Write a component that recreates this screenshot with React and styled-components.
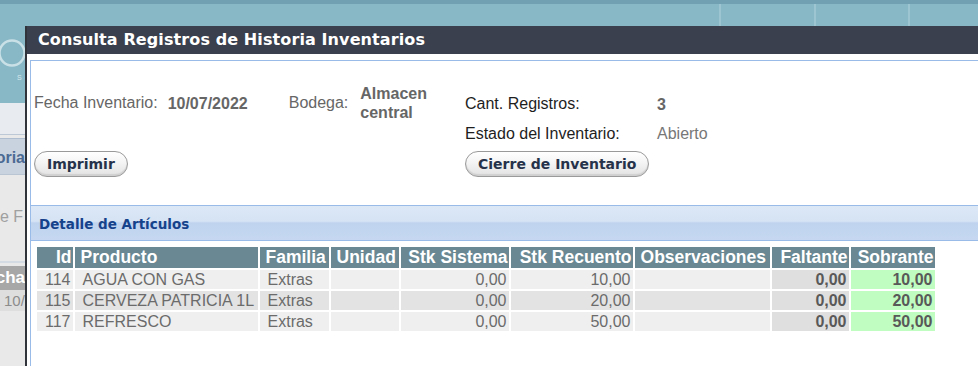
import React from "react";
import styled, { createGlobalStyle } from "styled-components";

const GlobalStyle = createGlobalStyle`
  * {
    box-sizing: border-box;
  }
  html,
  body {
    margin: 0;
    padding: 0;
    background: #e9e9e9;
    overflow: hidden;
  }
`;

const columns = [
  { key: "id", label: "Id", width: 35, align: "right" },
  { key: "producto", label: "Producto", width: 183 },
  { key: "familia", label: "Familia", width: 69 },
  { key: "unidad", label: "Unidad", width: 68 },
  { key: "sistema", label: "Stk Sistema", width: 108, align: "right" },
  { key: "recuento", label: "Stk Recuento", width: 122, align: "right" },
  { key: "obs", label: "Observaciones", width: 135 },
  { key: "faltante", label: "Faltante", width: 77, align: "right", tone: "short" },
  { key: "sobrante", label: "Sobrante", width: 84, align: "right", tone: "extra" },
];

const rows = [
  { id: 114, producto: "AGUA CON GAS", familia: "Extras", unidad: "", sistema: "0,00", recuento: "10,00", obs: "", faltante: "0,00", sobrante: "10,00" },
  { id: 115, producto: "CERVEZA PATRICIA 1L", familia: "Extras", unidad: "", sistema: "0,00", recuento: "20,00", obs: "", faltante: "0,00", sobrante: "20,00" },
  { id: 117, producto: "REFRESCO", familia: "Extras", unidad: "", sistema: "0,00", recuento: "50,00", obs: "", faltante: "0,00", sobrante: "50,00" },
];

function App() {
  return (
    <Page>
      <GlobalStyle />
      <TopBar>
        <Logo>
          <svg width="25" height="30" viewBox="0 0 25 30">
            <circle cx="12" cy="15" r="12.5" fill="none" stroke="#d9eaef" strokeWidth="2.5" opacity="0.8" />
          </svg>
          <LogoText>SOFTWARE</LogoText>
        </Logo>
        <TopTab />
        <TopTab $w={94} />
        <TopTab $w={70} />
      </TopBar>
      <Back>
        <Sidebar>
          <SideBlank />
          <SideTab>Historia</SideTab>
          <SideText>e F</SideText>
          <SideHead>Fecha</SideHead>
          <SideCell>10/</SideCell>
        </Sidebar>
      </Back>

      <Modal>
        <TitleBar>Consulta Registros de Historia Inventarios</TitleBar>
        <ModalBody>
          <Frame>
            <InfoArea>
              <LeftCol>
                <FieldsRow>
                  <Label>Fecha Inventario:</Label>
                  <Value $gap={10}>10/07/2022</Value>
                  <Label $gap={41}>Bodega:</Label>
                  <Value $gap={12} $wrap>Almacen central</Value>
                </FieldsRow>
                <Button>Imprimir</Button>
              </LeftCol>
              <RightCol>
                <InfoLine>
                  <DarkLabel>Cant. Registros:</DarkLabel>
                  <Value>3</Value>
                </InfoLine>
                <InfoLine>
                  <DarkLabel>Estado del Inventario:</DarkLabel>
                  <PlainValue>Abierto</PlainValue>
                </InfoLine>
                <Button $top={2}>Cierre de Inventario</Button>
              </RightCol>
            </InfoArea>

            <SectionHeader>Detalle de Artículos</SectionHeader>

            <TableWrap>
              <Grid>
                <thead>
                  <tr>
                    {columns.map((c) => (
                      <Th key={c.key} $w={c.width} $align={c.align}>
                        {c.label}
                      </Th>
                    ))}
                  </tr>
                </thead>
                <tbody>
                  {rows.map((r, i) => (
                    <tr key={r.id}>
                      {columns.map((c) => (
                        <Td key={c.key} $align={c.align} $tone={c.tone} $even={i % 2 === 1}>
                          {r[c.key]}
                        </Td>
                      ))}
                    </tr>
                  ))}
                </tbody>
              </Grid>
            </TableWrap>
          </Frame>
        </ModalBody>
      </Modal>
    </Page>
  );
}

export default App;

const Page = styled.div`
  position: relative;
  width: 978px;
  height: 366px;
  overflow: hidden;
  background: #e9e9e9;
  font-family: "Liberation Sans", Arial, sans-serif;
`;

const TopBar = styled.div`
  display: flex;
  height: 103px;
  background: #88b8c6;
  border-top: 4px solid #70a0b1;
`;

const Logo = styled.div`
  width: 719px;
  padding-top: 34px;
  display: flex;
  flex-direction: column;
`;

const LogoText = styled.span`
  margin: 6px 0 0 17px;
  font-size: 7px;
  letter-spacing: 3px;
  color: #d6e7ec;
`;

const TopTab = styled.div`
  width: ${(p) => p.$w || 95}px;
  height: 22px;
  border-left: 2px solid #9cc5d1;
`;

const Back = styled.div`
  display: flex;
`;

const Sidebar = styled.div`
  width: 25px;
  display: flex;
  flex-direction: column;
  overflow: hidden;
  white-space: nowrap;
`;

const SideBlank = styled.div`
  height: 32px;
  background: #e8ecf1;
  border-bottom: 1px solid #bcc8d6;
`;

const SideTab = styled.div`
  display: flex;
  justify-content: flex-end;
  height: 37px;
  margin-top: 3px;
  padding-top: 2px;
  border-top: 1px solid #aebdcf;
  border-bottom: 1px solid #b9c5d3;
  background: #c9d3df;
  color: #4b6a93;
  font-weight: bold;
  font-size: 16px;
  line-height: 34px;
`;

const SideText = styled.div`
  height: 88px;
  padding-top: 33px;
  border-bottom: 2px solid #d4dbe2;
  color: #a0a0a0;
  font-size: 16px;
`;

const SideHead = styled.div`
  display: flex;
  justify-content: flex-end;
  height: 24px;
  margin-top: 3px;
  background: #a7a7a7;
  color: #fff;
  font-weight: bold;
  font-size: 17px;
  line-height: 24px;
`;

const SideCell = styled.div`
  height: 21px;
  padding-left: 4px;
  background: #dedede;
  color: #8c8c8c;
  font-size: 15px;
  line-height: 21px;
`;

const Modal = styled.div`
  position: absolute;
  left: 25px;
  top: 26px;
  right: 0;
  bottom: 0;
  display: flex;
  flex-direction: column;
  background: #fff;
  border-left: 2px solid #30343a;
`;

const TitleBar = styled.div`
  height: 28px;
  padding-left: 11px;
  background: #3a404d;
  color: #fff;
  font-family: "DejaVu Sans", Verdana, sans-serif;
  font-weight: bold;
  font-size: 16px;
  letter-spacing: 0.1px;
  line-height: 28px;
`;

const ModalBody = styled.div`
  flex: 1;
  display: flex;
  padding: 6px 0 0 3px;
`;

const Frame = styled.div`
  flex: 1;
  border-top: 1px solid #99bbe8;
  border-left: 1px solid #99bbe8;
`;

const InfoArea = styled.div`
  display: flex;
  height: 144px;
  padding-left: 3px;
`;

const LeftCol = styled.div`
  width: 431px;
  display: flex;
  flex-direction: column;
  align-items: flex-start;
  padding-top: 22px;
`;

const RightCol = styled.div`
  display: flex;
  flex-direction: column;
  align-items: flex-start;
  padding-top: 28px;
`;

const FieldsRow = styled.div`
  display: flex;
  align-items: center;
  height: 40px;
  margin-bottom: 28px;
`;

const Label = styled.span`
  margin-left: ${(p) => p.$gap || 0}px;
  color: #666;
  font-size: 16px;
`;

const Value = styled.span`
  margin-left: ${(p) => p.$gap || 0}px;
  width: ${(p) => (p.$wrap ? "74px" : "auto")};
  color: #666;
  font-weight: bold;
  font-size: 16px;
  line-height: 19px;
`;

const PlainValue = styled.span`
  color: #777;
  font-size: 16px;
`;

const InfoLine = styled.div`
  display: flex;
  align-items: center;
  height: 30px;
`;

const DarkLabel = styled.span`
  width: 192px;
  color: #1e1e1e;
  font-size: 16px;
`;

const Button = styled.button`
  height: 26px;
  margin: ${(p) => p.$top || 0}px 0 0;
  padding: 0 12px;
  border: 1px solid #9a9a9a;
  border-radius: 13px;
  background: linear-gradient(to bottom, #ffffff 0%, #f4f4f4 45%, #e2e2e2 100%);
  box-shadow: inset 0 -2px 1px #d0d0d0;
  color: #25324a;
  font-family: "DejaVu Sans", Verdana, sans-serif;
  font-weight: bold;
  font-size: 14px;
  line-height: 22px;
  cursor: pointer;
`;

const SectionHeader = styled.div`
  height: 36px;
  padding: 3px 0 0 8px;
  border-top: 1px solid #99bbe8;
  border-bottom: 1px solid #99bbe8;
  background: linear-gradient(to bottom, #dde8f6 0%, #d5e3f4 45%, #bfd3ef 50%, #c6d8f1 100%);
  color: #15428b;
  font-family: "DejaVu Sans", Verdana, sans-serif;
  font-weight: bold;
  font-size: 13.5px;
  line-height: 31px;
`;

const TableWrap = styled.div`
  padding: 4px;
`;

const Grid = styled.table`
  border-collapse: separate;
  border-spacing: 2px;
  table-layout: fixed;
  white-space: nowrap;
`;

const Th = styled.th`
  width: ${(p) => p.$w}px;
  height: 21px;
  padding: 0 1px 0 6px;
  background: #698893;
  color: #fff;
  font-size: 17.5px;
  font-weight: bold;
  line-height: 21px;
  text-align: ${(p) => p.$align || "left"};
  overflow: hidden;
`;

const toneBg = {
  short: "#dfdfdf",
  extra: "#c0fdc0",
};

const Td = styled.td`
  height: 19px;
  padding: 0 2px 0 8px;
  background: ${(p) => toneBg[p.$tone] || (p.$even ? "#e3e3e3" : "#efefef")};
  color: ${(p) => (p.$tone ? "#595959" : "#6b6b6b")};
  font-size: 16px;
  font-weight: ${(p) => (p.$tone ? "bold" : "normal")};
  line-height: 19px;
  text-align: ${(p) => p.$align || "left"};
  overflow: hidden;
`;
